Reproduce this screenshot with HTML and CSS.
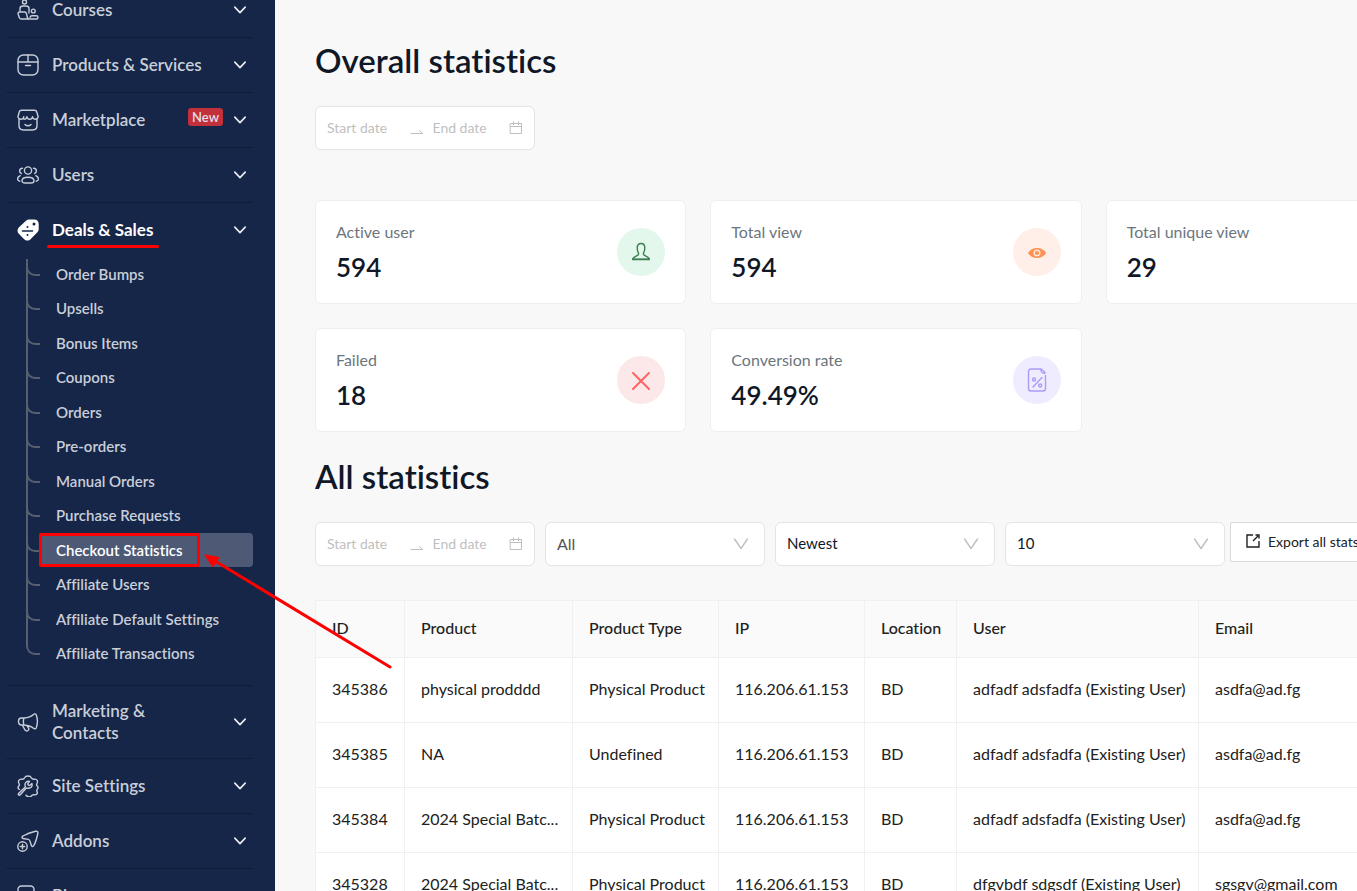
FILE: index.html
```html
<!DOCTYPE html>
<html lang="en">
<head>
<meta charset="utf-8">
<meta name="viewport" content="width=device-width, initial-scale=1">
<title>Checkout Statistics</title>
<link rel="stylesheet" href="styles.css">
</head>
<body>
<svg class="sprite" aria-hidden="true">
  <symbol id="chevron" viewBox="0 0 12 12"><path d="M.8 3.2 6 8.6l5.200-5.400"/></symbol>
  <symbol id="caret" viewBox="0 0 16 16"><path d="M1.500 3 8 12.500 14.500 3"/></symbol>
  <symbol id="swap" viewBox="0 0 14 14"><path d="M1 12.500h11.500L9.500 9.500"/></symbol>
  <symbol id="calendar" viewBox="0 0 14 14"><path d="M1.500 2.500h11v10h-11zM1.500 5.500h11M4.500 .8v3M9.500 .8v3"/></symbol>
</svg>
<div class="app">
  <aside class="sidebar">
    <nav class="menu" aria-label="Main">
      <div class="group"><button class="row" type="button">
        <svg class="icon" viewBox="0 0 22 22"><circle cx="7.500" cy="3" r="2"/><circle cx="16.300" cy="12" r="1.900"/><path d="M3 12V9.500C3 7.800 4.200 7 6 7h3c1.800 0 3 .8 3 2.500V14M1 14.500c0-1 .5-1.500 1.500-1.500h5.300c1 0 1.400.4 1.600 1.300l1 4.200c.2.800.7 1.500 1.700 1.500H4c-1 0-1.500-.5-1.700-1.300zM12 20h7.500c1 0 1.500-.6 1.500-1.500s-.6-1.700-1.700-1.700H15c-1.200 0-1.800.6-2 1.500M6 20h13"/></svg>
        <span class="label">Courses</span><svg class="chev"><use href="#chevron"/></svg></button></div>
      <div class="group"><button class="row" type="button">
        <svg class="icon" viewBox="0 0 22 22"><rect x="1" y="1" width="20" height="20" rx="5.500"/><path d="M1 8h20M11 1v7M8.500 11.500h5"/></svg>
        <span class="label">Products &amp; Services</span><svg class="chev"><use href="#chevron"/></svg></button></div>
      <div class="group"><button class="row" type="button">
        <svg class="icon" viewBox="0 0 22 22"><path d="M2 10v6.500C2 19.500 3.500 21 6.500 21h9c3 0 4.500-1.500 4.500-4.500V10M4.500 1.200h13c1.200 0 2 .7 2.300 1.800L21 7.200c.4 1.700-.9 3-2.500 3-1.500 0-2.700-.9-3-2.400-.3 1.500-1.400 2.400-2.800 2.400S10.200 9.300 9.900 7.800M9.900 7.800C9.600 9.300 8.500 10.200 7 10.200M6.800 7.800c-.3 1.500-1.500 2.400-3 2.400C2 10.200.7 8.900 1.100 7.200L2.200 3c.3-1.100 1.100-1.800 2.300-1.800M8 15.500c1.500 1.700 4.500 1.700 6 0"/></svg>
        <span class="label">Marketplace</span><span class="badge">New</span><svg class="chev"><use href="#chevron"/></svg></button></div>
      <div class="group"><button class="row" type="button">
        <svg class="icon" viewBox="0 0 22 22"><circle cx="11" cy="6.500" r="3.600"/><path d="M11 13.200c3.600 0 6 1.500 6 3.600 0 1.500-1.400 2.200-3 2.200H8c-1.600 0-3-.7-3-2.200 0-2.100 2.400-3.600 6-3.600zM5.500 4.300c-1.800.1-2.900 1.200-2.900 2.700 0 1.100.6 2 1.700 2.500M16.500 4.300c1.800.1 2.900 1.200 2.900 2.700 0 1.100-.6 2-1.700 2.500M3.200 11.700C1.500 12.500.6 13.500.6 15c0 1.200.8 2 2.200 2.200M18.800 11.700c1.700.8 2.600 1.800 2.600 3.300 0 1.200-.8 2-2.200 2.200"/></svg>
        <span class="label">Users</span><svg class="chev"><use href="#chevron"/></svg></button></div>
      <div class="group group-open"><button class="row row-active" type="button" aria-expanded="true">
        <svg class="icon icon-solid" viewBox="0 0 22 22"><path class="fill" d="M12.500.5h4.800c2.700 0 4.400 1.700 4.400 4.400V10c0 1.200-.4 2.300-1.300 3.200L13.800 20c-2 2-4.800 2-6.800 0l-5-5c-2-2-2-4.800 0-6.800l7-6.400c1-.9 2.100-1.300 3.500-1.300z"/><path class="cut" d="M5.500 12h10"/><circle class="dot" cx="10.500" cy="8" r="1"/><circle class="dot" cx="10.500" cy="16" r="1"/><circle class="dot" cx="17" cy="5" r="1.500"/></svg>
        <span class="label"><span class="marked">Deals &amp; Sales</span></span><svg class="chev"><use href="#chevron"/></svg></button>
        <ul class="submenu">
          <li><a href="#">Order Bumps</a></li>
          <li><a href="#">Upsells</a></li>
          <li><a href="#">Bonus Items</a></li>
          <li><a href="#">Coupons</a></li>
          <li><a href="#">Orders</a></li>
          <li><a href="#">Pre-orders</a></li>
          <li><a href="#">Manual Orders</a></li>
          <li><a href="#">Purchase Requests</a></li>
          <li><a href="#" class="current" aria-current="page">Checkout Statistics</a></li>
          <li><a href="#">Affiliate Users</a></li>
          <li><a href="#">Affiliate Default Settings</a></li>
          <li><a href="#">Affiliate Transactions</a></li>
        </ul>
      </div>
      <div class="group"><button class="row" type="button">
        <svg class="icon" viewBox="0 0 22 22"><path d="M7 7c4-.3 7.300-1.500 9.500-3.600 1-.9 2.300-.6 2.800.6 1.300 3.600 1.300 9 0 12.700-.5 1.200-1.800 1.500-2.800.6C14.300 15.300 11 14.500 7 14M7 7H4.500C2.500 7 1.500 8.500 1.500 10.500S2.500 14 4.500 14H7M7 7c-.8 2.200-.8 4.800 0 7M5.500 14.500l2.300 4.200c.8 1.300 2.200 1.600 3.200.8.900-.7 1-1.900.3-2.900L10 14.800"/></svg>
        <span class="label">Marketing &amp;<br>Contacts</span><svg class="chev"><use href="#chevron"/></svg></button></div>
      <div class="group"><button class="row" type="button">
        <svg class="icon" viewBox="0 0 22 22"><path d="M2.500 14.500C.6 13.500.6 12.300 1.800 11c.8-.8.800-1.500.2-2.500-1.200-2-.2-4.600 2.600-4.300 1.700.2 2.400-.1 3.100-1.500.8-2.200 5.800-2.200 6.600 0 .7 1.400 1.400 1.700 3.100 1.500 2.800-.3 3.800 2.300 2.600 4.300-.6 1-.6 1.700.2 2.500 1.200 1.300 1.200 2.200 0 3.500-.8.800-.6 1.300-.2 2 1 2-.6 3.600-2.600 3.300-1.700-.3-2.300 0-3.100 1.200-.9 1.200-4.200 1.200-5.300-.8M1.800 18.200l6-5.700c.6-.5.700-1 .4-1.700-.9-2.700 1.200-5 4.300-4.400L11.200 8c-.6.700-.5 1.300.1 1.900.6.600 1.300.7 1.900.1l1.700-1.500c.9 3.300-1.500 5.400-4.300 4.600-.7-.2-1.200-.1-1.700.4l-5.400 6c-1.300 1.500-3.100 0-1.700-1.300z"/></svg>
        <span class="label">Site Settings</span><svg class="chev"><use href="#chevron"/></svg></button></div>
      <div class="group"><button class="row" type="button">
        <svg class="icon" viewBox="0 0 22 22"><circle cx="5.500" cy="16.500" r="4.700"/><path d="M5.500 14.300v4.400M3.300 16.500h4.400M6 8.500C4.700 8 4.800 6.600 6 6c3.500-2 8-3.700 12.500-4.700 1.800-.4 2.600.4 2.300 2.200-.9 4.500-2 8.500-4 12-.7 1.200-2 1.300-2.400 0l-1.500-4.600c-.3-.8-.8-1.300-1.600-1.500z"/></svg>
        <span class="label">Addons</span><svg class="chev"><use href="#chevron"/></svg></button></div>
      <div class="group"><button class="row" type="button">
        <svg class="icon" viewBox="0 0 22 22"><rect x="1" y="1" width="16" height="20" rx="3.500"/><path d="M5 7h8M5 11h8"/></svg>
        <span class="label">Blogs</span><svg class="chev"><use href="#chevron"/></svg></button></div>
    </nav>
  </aside>

  <main class="content">
    <h1 class="title">Overall statistics</h1>
    <div class="range range-top">
      <input type="text" placeholder="Start date" aria-label="Overall start date">
      <svg class="swap"><use href="#swap"/></svg>
      <input type="text" placeholder="End date" aria-label="Overall end date">
      <svg class="calendar"><use href="#calendar"/></svg>
    </div>

    <section class="cards">
      <article class="card"><div><p class="card-label">Active user</p><p class="card-value">594</p></div>
        <span class="disc disc-green"><svg width="20" height="20" viewBox="0 0 20 20"><path d="M7.500 12.500V11C6.600 9.800 6.200 7.800 6.200 5.800 6.200 3.200 7.500 1.500 10 1.500s3.800 1.700 3.800 4.300c0 2-.4 4-1.300 5.200v1.500c.5 1.300 5.500 1.700 5.900 5H1.600c.4-3.300 5.400-3.700 5.900-5z"/><path d="M2 17.200h16"/></svg></span></article>
      <article class="card"><div><p class="card-label">Total view</p><p class="card-value">594</p></div>
        <span class="disc disc-orange"><svg width="20" height="20" viewBox="0 0 20 20"><path class="fill" d="M1 11c2-3.300 5-5 9-5s7 1.700 9 5c-2 3.300-5 5-9 5s-7-1.700-9-5z"/><circle class="ring" cx="10" cy="11" r="2.800"/></svg></span></article>
      <article class="card"><div><p class="card-label">Total unique view</p><p class="card-value">29</p></div>
        <span class="disc disc-orange"><svg width="20" height="20" viewBox="0 0 20 20"><path class="fill" d="M1 11c2-3.300 5-5 9-5s7 1.700 9 5c-2 3.300-5 5-9 5s-7-1.700-9-5z"/><circle class="ring" cx="10" cy="11" r="2.800"/></svg></span></article>
      <article class="card"><div><p class="card-label">Failed</p><p class="card-value">18</p></div>
        <span class="disc disc-red"><svg width="20" height="20" viewBox="0 0 20 20"><path d="M2 3l16 16M18 3 2 19"/></svg></span></article>
      <article class="card"><div><p class="card-label">Conversion rate</p><p class="card-value">49.49%</p></div>
        <span class="disc disc-violet"><svg width="20" height="24" viewBox="0 0 20 24"><path d="M14 1H4C2.300 1 1.500 2 1.500 3.500v17c0 1.600.8 2.500 2.500 2.500h12c1.700 0 2.500-.9 2.500-2.500V7.500M13.800 1.300c0 2.900.8 4 4 4M14.500 1.200l3.600 3.300M15 9.500 6 19"/><circle cx="7" cy="11.500" r="1.500"/><circle cx="13.200" cy="17.500" r="1.500"/></svg></span></article>
    </section>

    <h2 class="title">All statistics</h2>
    <div class="filters">
      <div class="range">
        <input type="text" placeholder="Start date" aria-label="Start date">
        <svg class="swap"><use href="#swap"/></svg>
        <input type="text" placeholder="End date" aria-label="End date">
        <svg class="calendar"><use href="#calendar"/></svg>
      </div>
      <div class="select select-muted"><select aria-label="Product"><option>All</option></select><svg><use href="#caret"/></svg></div>
      <div class="select"><select aria-label="Sort order"><option>Newest</option><option>Oldest</option></select><svg><use href="#caret"/></svg></div>
      <div class="select"><select aria-label="Rows per page"><option>10</option><option>20</option></select><svg><use href="#caret"/></svg></div>
      <button class="export" type="button"><svg width="14" height="14" viewBox="0 0 14 14"><path d="M7 1H1v12h12V7M7 7l5-5M9.500 1H13v3.500"/></svg>Export all stats</button>
    </div>

    <table class="stats">
      <colgroup><col class="c-id"><col class="c-product"><col class="c-type"><col class="c-type"><col class="c-loc"><col class="c-user"><col></colgroup>
      <thead><tr><th>ID</th><th>Product</th><th>Product Type</th><th>IP</th><th>Location</th><th>User</th><th>Email</th></tr></thead>
      <tbody>
        <tr><td>345386</td><td>physical prodddd</td><td>Physical Product</td><td>116.206.61.153</td><td>BD</td><td>adfadf adsfadfa (Existing User)</td><td>asdfa@ad.fg</td></tr>
        <tr><td>345385</td><td>NA</td><td>Undefined</td><td>116.206.61.153</td><td>BD</td><td>adfadf adsfadfa (Existing User)</td><td>asdfa@ad.fg</td></tr>
        <tr><td>345384</td><td>2024 Special Batc...</td><td>Physical Product</td><td>116.206.61.153</td><td>BD</td><td>adfadf adsfadfa (Existing User)</td><td>asdfa@ad.fg</td></tr>
        <tr><td>345328</td><td>2024 Special Batc...</td><td>Physical Product</td><td>116.206.61.153</td><td>BD</td><td>dfgvbdf sdgsdf (Existing User)</td><td>sgsgv@gmail.com</td></tr>
      </tbody>
    </table>
  </main>
  <svg class="arrow" width="190" height="118" viewBox="0 0 190 118" aria-hidden="true"><path class="shaft" d="M186 113 11 7"/><path class="head" d="M1 1l14 2.500-6 9z"/></svg>
</div>
</body>
</html>
```
FILE: styles.css
```css
*, *::before, *::after { box-sizing: border-box; }
body {
  margin: 0;
  height: 100vh;
  overflow: hidden;
  background: #f8f8f8;
  color: #212121;
  font-family: Lato, "Liberation Sans", sans-serif;
  font-size: 16px;
  font-variant-ligatures: none;
}
button, input, select { font: inherit; color: inherit; }
h1, h2, p, ul { margin: 0; padding: 0; }
svg { fill: none; stroke: currentColor; stroke-linecap: round; stroke-linejoin: round; flex: none; }
.sprite { position: absolute; width: 0; height: 0; }
.app { position: relative; display: flex; min-height: 100%; }

/* Sidebar */
.sidebar { flex: none; width: 275px; height: 100vh; overflow: hidden; padding: 0 22px 0 6px; background: #152649; color: #c9ced8; }
.menu { margin-top: -17px; }
.group { border-bottom: 1px solid #101d3a; }
.row {
  display: flex;
  align-items: center;
  width: 100%;
  min-height: 54px;
  padding: 14px 7px 14px 11px;
  border: 0;
  background: none;
  text-align: left;
  font-size: 17px;
  font-weight: 600;
  line-height: 22px;
  cursor: pointer;
}
.row-active { color: #fff; font-weight: 700; }
.icon { width: 22px; height: 22px; margin-right: 13px; stroke-width: 1.4; }
.icon-solid .fill { fill: #fff; stroke: none; }
.icon-solid .cut { stroke: #152649; stroke-width: 1.6; }
.icon-solid .dot { fill: #152649; stroke: none; }
.label { flex: 1; }
.marked { position: relative; }
.marked::after { content: ""; position: absolute; left: -5px; right: -6px; bottom: -8px; height: 3px; border-radius: 2px; background: #f00; }
.badge { margin: 0 11px 6px 0; padding: 0 4px; border-radius: 3px; background: #c2303c; color: #e4dfe6; font-size: 13px; font-weight: 600; line-height: 18px; }
.chev { width: 12px; height: 12px; stroke: #e8eaee; stroke-width: 1.7; }
.group-open { padding-bottom: 14px; }
.submenu { list-style: none; padding-left: 20px; font-size: 15px; font-weight: 600; }
.submenu li { position: relative; padding-left: 13px; line-height: 34px; }
.submenu li:nth-child(even) { line-height: 35px; }
.submenu li::before { content: ""; position: absolute; left: 0; top: 0; bottom: 0; border-left: 2px solid #58606f; }
.submenu li:first-child::before { top: 2px; }
.submenu li:last-child::before { bottom: 24px; }
.submenu li::after { content: ""; position: absolute; left: 0; top: 6px; width: 14px; height: 13px; border: solid #58606f; border-width: 0 0 2px 2px; border-bottom-left-radius: 9px; }
.submenu a { position: relative; z-index: 1; display: block; padding-left: 17px; border-radius: 4px; color: inherit; text-decoration: none; }
.submenu .current { background: #4e5a75; color: #fff; }
.current::after { content: ""; position: absolute; left: 0; top: 0; bottom: 0; width: 161px; border: 3px solid #f00; border-radius: 2px; }

/* Content */
.content { flex: none; width: 86%; min-width: 1242px; height: 100vh; overflow: hidden; padding: 36px 40px 0; }
.title { color: #101828; font-size: 33px; font-weight: 600; line-height: 48px; }
.range {
  display: flex;
  align-items: center;
  width: 220px;
  height: 44px;
  padding: 0 11px;
  border: 1px solid #e4e4e4;
  border-radius: 6px;
  background: #fff;
  color: #bfbfbf;
  font-size: 14px;
}
.range-top { margin: 22px 0 50px; }
.range input { flex: 1; min-width: 0; padding: 0 0 2px; border: 0; outline: 0; background: none; }
.range input::placeholder { color: #bfbfbf; opacity: 1; }
.swap { width: 14px; height: 14px; margin: 0 9px 0 6px; }
.calendar { width: 14px; height: 14px; stroke-linejoin: miter; }

.cards { display: grid; grid-template-columns: repeat(3, 1fr); gap: 24px; margin-bottom: 20px; }
.card { display: flex; align-items: center; justify-content: space-between; min-height: 104px; padding: 18px 20px; border: 1px solid #eeefef; border-radius: 6px; background: #fff; }
.card-label { color: #6c757d; line-height: 24px; }
.card-value { margin-top: 5px; color: #101828; font-size: 26px; font-weight: 600; line-height: 36px; }
.disc { display: flex; align-items: center; justify-content: center; width: 48px; height: 48px; border-radius: 50%; }
.disc svg { stroke-width: 1.4; }
.disc-green { background: #e3f7ec; color: #3b7d50; }
.disc-orange { background: #ffefe8; color: #ff9155; }
.disc-orange .fill { fill: currentColor; stroke: none; }
.disc-orange .ring { stroke: #ffe9de; }
.disc-red { background: #fce8e9; color: #ff6464; }
.disc-red svg { stroke-width: 2; }
.disc-violet { background: #eeecfe; color: #a99cfb; }

.filters { display: flex; gap: 10px; margin-top: 22px; }
.select { position: relative; width: 220px; }
.select select { appearance: none; display: block; width: 100%; height: 44px; padding: 0 11px 2px; border: 1px solid #e4e4e4; border-radius: 6px; background: #fff; color: #101828; font-size: 15px; }
.select-muted select { color: #555; font-size: 16px; }
.select svg { position: absolute; right: 16px; top: 14px; width: 16px; height: 16px; color: #bfbfbf; stroke-width: 1.4; pointer-events: none; }
.export { display: flex; align-items: center; gap: 8px; height: 40px; margin-left: -5px; padding: 0 15px 2px; border: 1px solid #d9d9d9; border-radius: 2px; background: #fff; font-size: 14px; white-space: nowrap; }
.export svg { stroke-width: 1.4; stroke-linecap: butt; stroke-linejoin: miter; }

.stats { table-layout: fixed; width: 100%; margin-top: 34px; border-spacing: 0; border: solid #f0f0f0; border-width: 1px 0 0 1px; background: #fff; }
.stats th, .stats td { padding: 0 16px 3px; border: solid #f0f0f0; border-width: 0 1px 1px 0; text-align: left; white-space: nowrap; line-height: 24px; }
.stats th { height: 57px; background: #fafafa; font-weight: 500; }
.stats td { height: 65px; }
.c-id { width: 89px; }
.c-product { width: 168px; }
.c-type { width: 146px; }
.c-loc { width: 92px; }
.c-user { width: 242px; }

.arrow { position: absolute; z-index: 2; left: 204px; top: 554px; pointer-events: none; }
.arrow .shaft { stroke: #f00; stroke-width: 3; }
.arrow .head { fill: #f00; stroke: #f00; stroke-width: 1; }
```
